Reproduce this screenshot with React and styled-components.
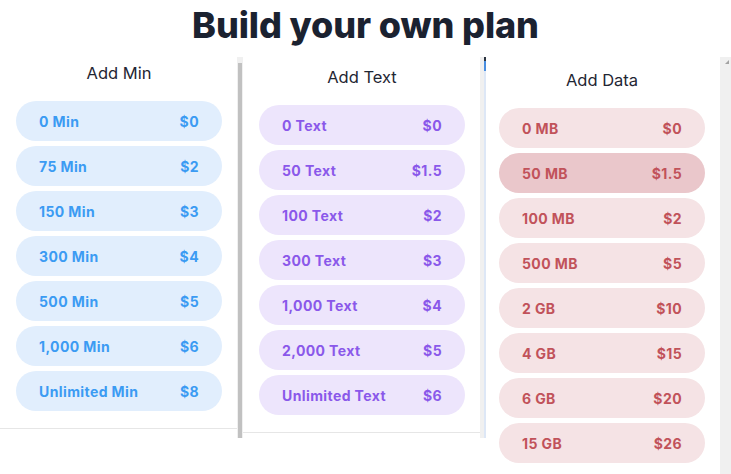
import React from "react";
import styled, { createGlobalStyle } from "styled-components";

const Global = createGlobalStyle`
  html, body { margin: 0; padding: 0; background: #ffffff; }
  body { font-family: Inter, "Noto Sans", sans-serif; overflow: hidden; }
`;

const Page = styled.div`
  width: 731px;
  height: 474px;
  overflow: hidden;
  display: flex;
  flex-direction: column;
`;

const Title = styled.h1`
  margin: 0;
  height: 57px;
  flex-shrink: 0;
  display: flex;
  align-items: center;
  justify-content: center;
  font-family: Inter, sans-serif;
  font-weight: 800;
  font-size: 36px;
  letter-spacing: -0.1px;
  color: #1b2230;
  padding-bottom: 7px;
  box-sizing: border-box;
`;

const Row = styled.div`
  display: flex;
  align-items: flex-start;
  flex-shrink: 0;
`;

const Panel = styled.section`
  width: ${(p) => p.$w}px;
  box-sizing: border-box;
  background: #ffffff;
  padding: ${(p) => p.$top}px 15px 17px ${(p) => p.$left}px;
  border-bottom: ${(p) => (p.$open ? "none" : "1px solid #e6e6e6")};
  display: flex;
  flex-direction: column;
`;

const Heading = styled.h2`
  margin: 0 0 18px;
  height: 20px;
  line-height: 20px;
  text-align: center;
  font-family: Inter, sans-serif;
  font-weight: 400;
  font-size: 16.5px;
  color: #1f2633;
`;

const List = styled.div`
  display: flex;
  flex-direction: column;
  gap: 5px;
`;

const themes = {
  blue: { fg: "#3b9bf3", bg: "#e1eefd", sel: "#cfe3fb" },
  purple: { fg: "#8a58ea", bg: "#ede5fc", sel: "#dccdf9" },
  red: { fg: "#c1525a", bg: "#f5e3e5", sel: "#eac7cb" },
};

const Pill = styled.div`
  height: 40px;
  border-radius: 20px;
  display: flex;
  align-items: center;
  justify-content: space-between;
  padding: 0 23px;
  background: ${(p) => (p.$selected ? themes[p.$tone].sel : themes[p.$tone].bg)};
  color: ${(p) => themes[p.$tone].fg};
  font-family: Inter, sans-serif;
  font-weight: 700;
  font-size: 14px;
  letter-spacing: 0.4px;
`;

const Gutter = styled.div`
  width: ${(p) => p.$w}px;
  height: ${(p) => p.$h}px;
  background: #f0f0f0;
  box-sizing: border-box;
  display: flex;
  flex-direction: column;
  align-items: ${(p) => p.$align || "flex-start"};
`;

const Thumb = styled.div`
  margin: 6px 0 0 1px;
  width: 4px;
  flex: 1;
  background: #c1c1c1;
`;

const EdgeLine = styled.div`
  align-self: flex-end;
  width: 2px;
  flex: 1;
  display: flex;
  flex-direction: column;
  background: #dde7f6;
`;

const EdgeMark = styled.div`
  height: ${(p) => p.$h}px;
  background: ${(p) => p.$c};
`;

const Arrow = styled.div`
  margin: 3px 2px 0 0;
  width: 0;
  height: 0;
  border-left: 4px solid transparent;
  border-bottom: 4px solid #a3a3a3;
`;

const minutes = [
  ["0 Min", "$0"],
  ["75 Min", "$2"],
  ["150 Min", "$3"],
  ["300 Min", "$4"],
  ["500 Min", "$5"],
  ["1,000 Min", "$6"],
  ["Unlimited Min", "$8"],
];
const texts = [
  ["0 Text", "$0"],
  ["50 Text", "$1.5"],
  ["100 Text", "$2"],
  ["300 Text", "$3"],
  ["1,000 Text", "$4"],
  ["2,000 Text", "$5"],
  ["Unlimited Text", "$6"],
];
const data = [
  ["0 MB", "$0"],
  ["50 MB", "$1.5", true],
  ["100 MB", "$2"],
  ["500 MB", "$5"],
  ["2 GB", "$10"],
  ["4 GB", "$15"],
  ["6 GB", "$20"],
  ["15 GB", "$26"],
];

function Options({ items, tone }) {
  return (
    <List>
      {items.map(([label, price, sel]) => (
        <Pill key={label} $tone={tone} $selected={!!sel}>
          <span>{label}</span>
          <span>{price}</span>
        </Pill>
      ))}
    </List>
  );
}

export default function App() {
  return (
    <Page>
      <Global />
      <Title>Build your own plan</Title>
      <Row>
        <Panel $w={237} $top={6} $left={16}>
          <Heading>Add Min</Heading>
          <Options items={minutes} tone="blue" />
        </Panel>
        <Gutter $w={6} $h={381}>
          <Thumb />
        </Gutter>
        <Panel $w={237} $top={10} $left={16}>
          <Heading>Add Text</Heading>
          <Options items={texts} tone="purple" />
        </Panel>
        <Gutter $w={6} $h={381}>
          <EdgeLine>
            <EdgeMark $h={4} $c="#2b3440" />
            <EdgeMark $h={10} $c="#4a8ee0" />
          </EdgeLine>
        </Gutter>
        <Panel $w={234} $top={13} $left={13} $open>
          <Heading>Add Data</Heading>
          <Options items={data} tone="red" />
        </Panel>
        <Gutter $w={11} $h={420} $align="flex-end">
          <Arrow />
        </Gutter>
      </Row>
    </Page>
  );
}
